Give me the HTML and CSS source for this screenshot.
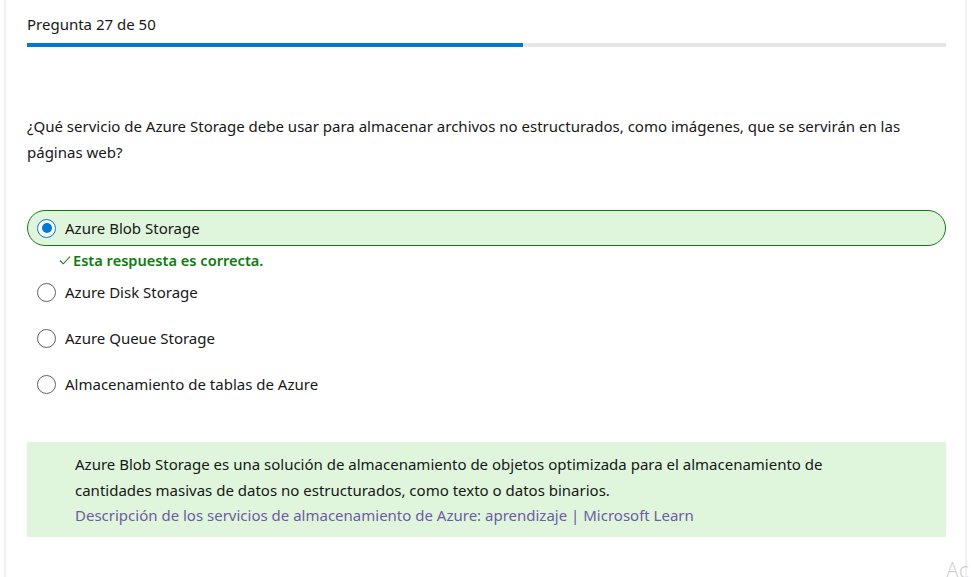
FILE: index.html
```html
<!DOCTYPE html>
<html lang="es">
<head>
<meta charset="utf-8">
<link rel="stylesheet" href="styles.css">
</head>
<body>
<main class="card">
  <div class="header">Pregunta 27 de 50</div>
  <div class="progress"><div class="progress-fill" style="width:54%"></div></div>
  <p class="question">¿Qué servicio de Azure Storage debe usar para almacenar archivos no estructurados, como imágenes, que se servirán en las páginas web?</p>
  <div class="options">
    <div class="option selected">
      <span class="radio checked"></span>
      <span class="label">Azure Blob Storage</span>
    </div>
    <div class="feedback"><svg class="check" width="12" height="12" viewBox="0 0 12 12"><path d="M1 6.5 L4.3 9.8 L11 2.5" fill="none" stroke="#107c10" stroke-width="1.1"/></svg>Esta respuesta es correcta.</div>
    <div class="option">
      <span class="radio"></span>
      <span class="label">Azure Disk Storage</span>
    </div>
    <div class="option">
      <span class="radio"></span>
      <span class="label">Azure Queue Storage</span>
    </div>
    <div class="option">
      <span class="radio"></span>
      <span class="label">Almacenamiento de tablas de Azure</span>
    </div>
  </div>
  <div class="explanation">
    <p>Azure Blob Storage es una solución de almacenamiento de objetos optimizada para el almacenamiento de cantidades masivas de datos no estructurados, como texto o datos binarios.</p>
    <a href="#">Descripción de los servicios de almacenamiento de Azure: aprendizaje | Microsoft Learn</a>
  </div>
</main>
<div class="watermark">Ac</div>
</body>
</html>
```
FILE: styles.css
```css
html, body {
  margin: 0;
  padding: 0;
  background: #fff;
  height: 577px;
  overflow: hidden;
}
body {
  font-family: "Noto Sans", "Open Sans", sans-serif;
  font-size: 15px;
  color: #171717;
  position: relative;
}
.card {
  margin-left: 4px;
  width: 963px;
  height: 577px;
  box-sizing: border-box;
  border-left: 2px solid #f1f1f1;
  border-right: 2px solid #f1f1f1;
  padding: 13px 19px 0 21px;
}
.header {
  line-height: 22px;
  height: 22px;
}
.progress {
  margin-top: 8px;
  height: 4px;
  background: #e6e6e6;
}
.progress-fill {
  height: 100%;
  background: #0078d4;
}
.question {
  margin: 66px 0 0;
  line-height: 26px;
}
.options {
  margin-top: 45px;
  display: flex;
  flex-direction: column;
}
.option {
  display: flex;
  align-items: center;
  height: 36px;
  box-sizing: border-box;
  padding-left: 9px;
  border: 1px solid transparent;
  border-radius: 18px;
  margin-bottom: 10px;
}
.option.selected {
  background: #dff6dd;
  border-color: #107c10;
  margin-bottom: 0;
}
.radio {
  width: 19px;
  height: 19px;
  border: 1px solid #616161;
  border-radius: 50%;
  box-sizing: border-box;
  margin-right: 9px;
  position: relative;
  background: #fff;
}
.radio.checked {
  border-color: #0078d4;
}
.radio.checked::after {
  content: "";
  position: absolute;
  left: 3.5px;
  top: 3.5px;
  width: 10px;
  height: 10px;
  border-radius: 50%;
  background: #0078d4;
}
.feedback {
  display: flex;
  align-items: center;
  height: 28px;
  padding-left: 32px;
  color: #107c10;
  font-weight: 600;
  font-size: 14.6px;
}
.check {
  margin-right: 2px;
}
.explanation {
  margin-top: 30px;
  background: #dff6dd;
  padding: 10px 40px 8px 48px;
  line-height: 25.5px;
}
.explanation p {
  margin: 0;
  max-width: 760px;
}
.explanation a {
  color: #6f5aa3;
  text-decoration: none;
}
.watermark {
  position: absolute;
  left: 946px;
  top: 556px;
  font-size: 21px;
  font-weight: 300;
  color: #d2d2d2;
  white-space: nowrap;
}
```
